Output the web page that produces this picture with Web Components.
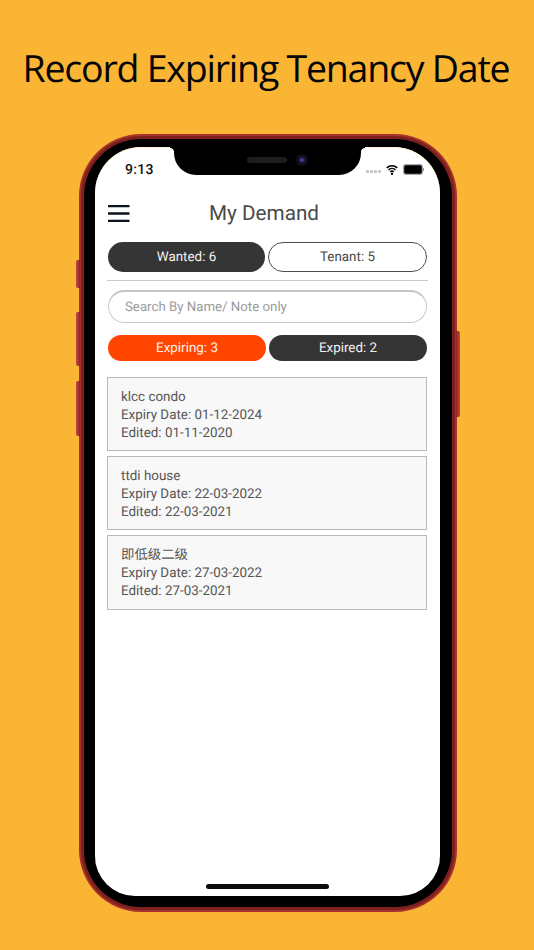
<!doctype html>
<html lang="en"><head><meta charset="utf-8"><title>My Demand</title>
<style>
html,body{margin:0;padding:0}
body{width:534px;height:950px;overflow:hidden;background:#fbb535;font-family:Roboto,"Noto Sans CJK SC",sans-serif;text-rendering:geometricPrecision}
</style></head><body>
<promo-page>
  <span slot="headline">Record Expiring Tenancy Date</span>
  <phone-shell>
    <status-bar></status-bar>
    <app-header>My Demand</app-header>
    <pill-row>
      <pill-button variant="dark">Wanted: 6</pill-button>
      <pill-button variant="outline">Tenant: 5</pill-button>
    </pill-row>
    <h-rule></h-rule>
    <search-box placeholder="Search By Name/ Note only"></search-box>
    <pill-row small>
      <pill-button variant="orange" small>Expiring: 3</pill-button>
      <pill-button variant="dark" small>Expired: 2</pill-button>
    </pill-row>
    <card-list>
      <demand-card name="klcc condo" expiry="01-12-2024" edited="01-11-2020"></demand-card>
      <demand-card name="ttdi house" expiry="22-03-2022" edited="22-03-2021"></demand-card>
      <demand-card name="即低级二级" expiry="27-03-2022" edited="27-03-2021"></demand-card>
    </card-list>
  </phone-shell>
</promo-page>
<script>
function def(name, css, html){
  customElements.define(name, class extends HTMLElement{
    constructor(){super();const s=this.attachShadow({mode:'open'});
      s.innerHTML='<style>'+css+'</style>'+(typeof html==='function'?html(this):html);}
  });
}
def('promo-page',`
:host{display:flex;flex-direction:column;align-items:center;width:534px;height:950px;box-sizing:border-box;padding-left:2px}
.h{height:134px;box-sizing:border-box;padding-top:40px;margin-left:-4px;font:37.5px/56px "Open Sans",sans-serif;color:#050505;letter-spacing:-1.22px;white-space:nowrap;text-align:center;width:534px}
`,`<div class="h"><slot name="headline"></slot></div><slot></slot>`);

def('phone-shell',`
:host{display:block;position:relative;box-sizing:border-box;width:378px;height:778px;border-radius:62px;
  background:#a5322c;padding:2px;}
.mid{box-sizing:border-box;height:100%;border-radius:60px;background:#7e211d;padding:3px}
.ring{box-sizing:border-box;height:100%;border-radius:57px;background:#000;padding:8px 12px 11px 11px;}
.screen{position:relative;box-sizing:border-box;height:100%;background:#fff;border-radius:46px 46px 40px 40px;overflow:hidden;
  display:flex;flex-direction:column;box-shadow:inset 0 1px 0 #fff2cf}
.notch{position:absolute;left:79px;top:-1px;width:187px;height:29px;background:#000;border-radius:0 0 22px 22px}
.ear{position:absolute;top:1px;width:4px;height:5px}
.ear.l{left:-4px;background:radial-gradient(circle at 0 100%,transparent 3.6px,#000 4.4px)}
.ear.r{right:-4px;background:radial-gradient(circle at 100% 100%,transparent 3.6px,#000 4.4px)}
.speaker{position:absolute;left:73px;top:11px;width:40px;height:6px;border-radius:3px;background:#1d1d1f}
.cam{position:absolute;left:122px;top:8px;width:12px;height:12px;border-radius:50%;background:radial-gradient(circle,#3b3a8c 0 18%,#14172c 30%,#0b0c18 70%)}
.home{position:absolute;left:111px;bottom:7px;width:123px;height:5px;border-radius:3px;background:#0b0b0b}
.btn{position:absolute;width:4px;background:linear-gradient(90deg,#c1474a,#8f2620);border-radius:2px 0 0 2px}
.b1{left:-3px;top:126px;height:28px}.b2{left:-3px;top:178px;height:54px}.b3{left:-3px;top:247px;height:55px}
.b4{right:-3px;top:197px;height:86px;border-radius:0 2px 2px 0;background:linear-gradient(270deg,#c1474a,#8f2620)}
`,`<span class="btn b1"></span><span class="btn b2"></span><span class="btn b3"></span><span class="btn b4"></span>
<div class="mid"><div class="ring"><div class="screen"><slot></slot>
<div class="notch"><i class="ear l"></i><i class="ear r"></i><span class="speaker"></span><span class="cam"></span></div><div class="home"></div></div></div></div>`);

def('status-bar',`
:host{display:flex;align-items:center;justify-content:space-between;height:32px;margin-top:6px;padding:0 16px 0 30px;flex:none}
.t{font:500 14px/16px Roboto,sans-serif;color:#111;letter-spacing:.3px;padding-top:2px}
.r{display:flex;align-items:center;gap:5px}
.sig{display:flex;gap:1px;margin-top:5px}.sig i{width:3px;height:3px;background:#c4c4c4;border-radius:1px}
svg{display:block}
`,`<span class="t">9:13</span><span class="r"><span class="sig"><i></i><i></i><i></i><i></i></span>
<svg width="12" height="11" viewBox="0 0 12 11"><path d="M.7 3.9a7.6 7.6 0 0 1 10.6 0M2.5 5.9a5 5 0 0 1 7 0M4.2 7.8a2.6 2.6 0 0 1 3.6 0" fill="none" stroke="#000" stroke-width="1.5"/><circle cx="6" cy="9.7" r="1.2" fill="#000"/></svg>
<svg width="21" height="11" viewBox="0 0 21 11"><rect x=".6" y=".6" width="18.8" height="9.8" rx="2.4" fill="#000" stroke="#a8a8a8" stroke-width="1.2"/><rect x="20" y="4" width="1" height="3" fill="#999"/></svg></span>`);

def('app-header',`
:host{display:flex;align-items:center;height:30px;margin-top:13px;padding:0 13px;position:relative;flex:none}
svg{display:block;flex:none}
.t{flex:1;text-align:center;font:20.7px/32px Roboto,sans-serif;color:#4a4a4a;padding-right:29px;padding-top:2px}
`,`<svg width="22" height="17" viewBox="0 0 22 17"><path d="M0 1.1h21.5M0 8.5h21.5M0 15.9h21.5" stroke="#0d1220" stroke-width="2.4" fill="none"/></svg><div class="t"><slot></slot></div>`);

def('pill-row',`
:host{display:flex;gap:3px;padding:0 13px;margin-top:14px;flex:none}
:host([small]){margin-top:12px}
`,`<slot></slot>`);

def('pill-button',`
:host{flex:1;display:flex;align-items:center;justify-content:center;box-sizing:border-box;height:30px;padding-top:2px;border-radius:15px;font:13.4px/1 Roboto,sans-serif;}
:host([small]){height:26px;border-radius:13px}
:host([variant=dark]){background:#353535;color:#f2f2f2}
:host([variant=outline]){background:#fff;color:#484848;border:1.2px solid #4c4c4c}
:host([variant=orange]){background:#ff4500;color:#fff1e8}
`,`<slot></slot>`);

def('h-rule',`:host{display:block;height:1px;background:#c9c9c9;margin:8px 12px 0;flex:none}`,``);

def('search-box',`
:host{display:block;margin:9px 13px 0;flex:none}
input{display:block;width:100%;box-sizing:border-box;height:33px;border-radius:17px;border:1px solid #c9c9c9;border-top:2px solid #c4c4c4;padding:0 16px;font:13.25px Roboto,sans-serif;background:#fff;outline:none;text-rendering:geometricPrecision}
input::placeholder{color:#9a9a9a;opacity:1}
`,h=>`<input type="text" placeholder="${h.getAttribute('placeholder')||''}">`);

def('card-list',`:host{display:flex;flex-direction:column;gap:5px;margin:16px 13px 0 12px;flex:none}`,`<slot></slot>`);

def('demand-card',`
:host{display:block;box-sizing:border-box;border:1.4px solid #b9b9b9;background:#f8f8f8;padding:10.5px 13px 8px;height:74px;font:13.4px/18.3px Roboto,"Noto Sans CJK SC",sans-serif;color:#555}
:host(:last-child){height:75px}
div{white-space:nowrap}
`,h=>`<div>${h.getAttribute('name')}</div><div>Expiry Date: ${h.getAttribute('expiry')}</div><div>Edited: ${h.getAttribute('edited')}</div>`);
</script>
</body></html>
